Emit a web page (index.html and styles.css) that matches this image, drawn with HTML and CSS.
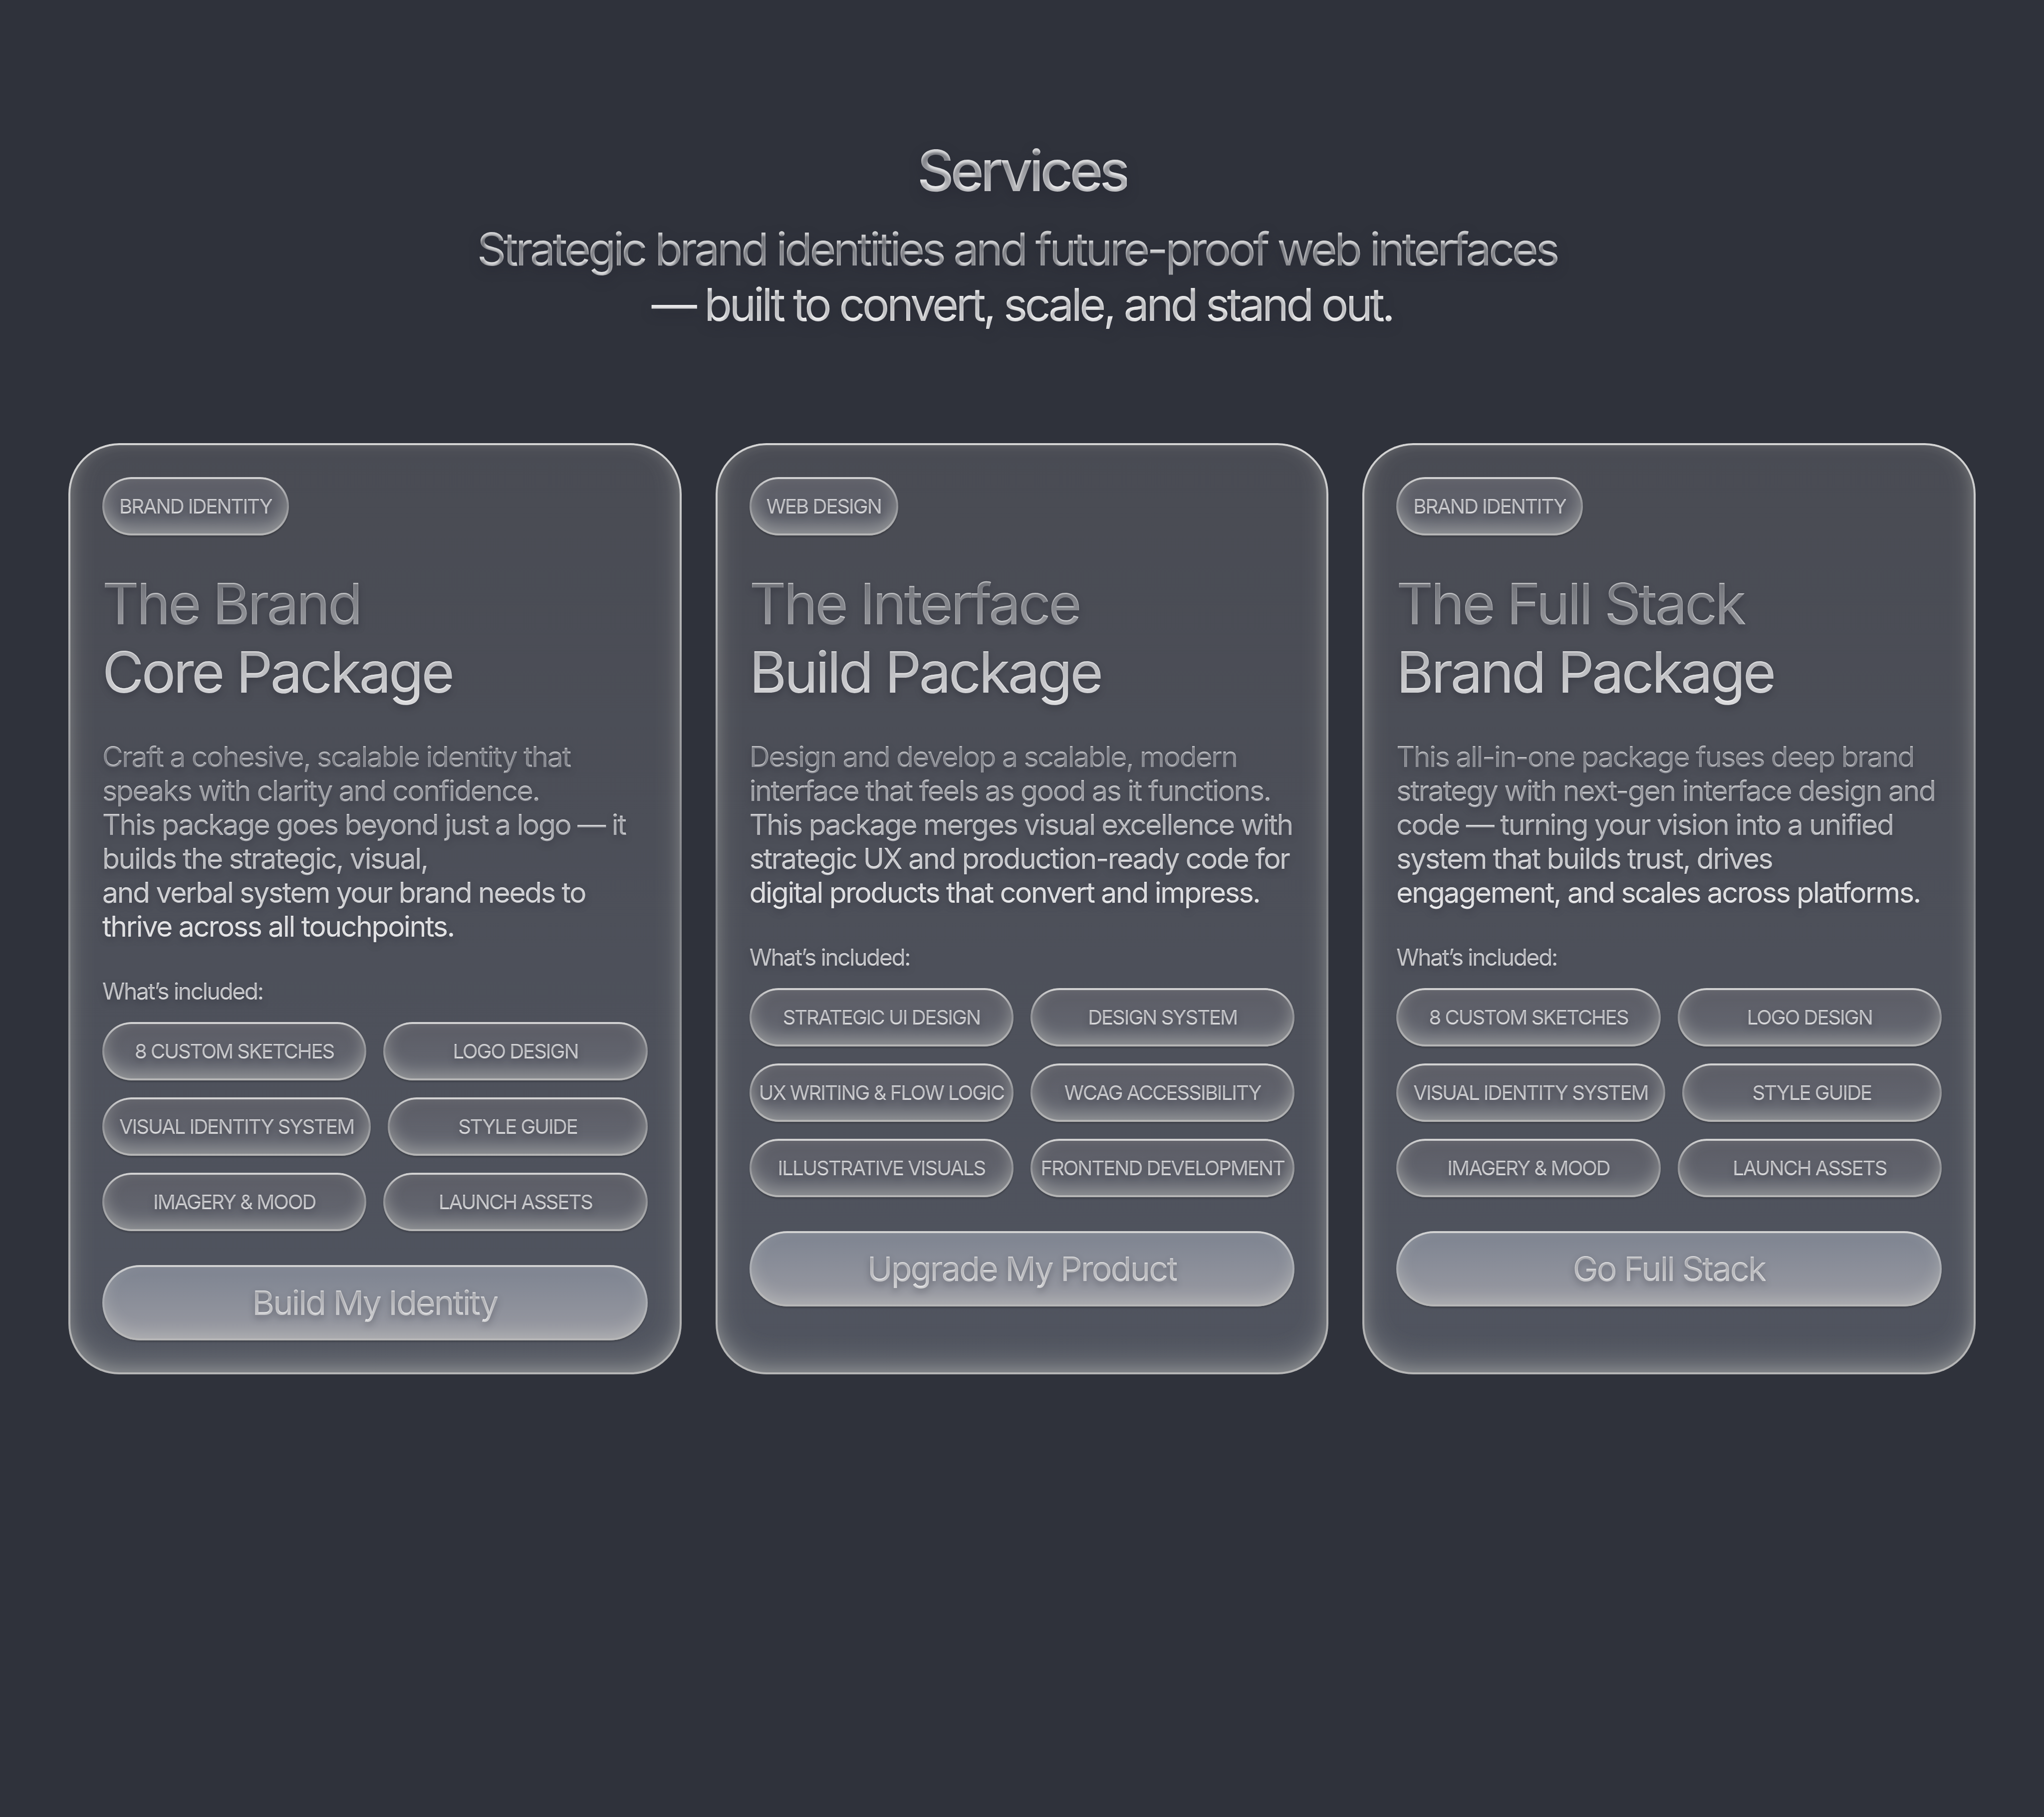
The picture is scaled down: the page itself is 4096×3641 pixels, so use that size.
FILE: index.html
```html
<!DOCTYPE html>
<html lang="en">
<head>
<meta charset="utf-8">
<title>Services</title>
<meta name="viewport" content="width=device-width, initial-scale=1">
<link rel="stylesheet" href="styles.css">
</head>
<body>
<svg class="defs" width="0" height="0" aria-hidden="true">
  <filter id="bevel" x="-5%" y="-20%" width="110%" height="150%" color-interpolation-filters="sRGB">
    <feOffset in="SourceAlpha" dy="2" result="low"/>
    <feGaussianBlur in="low" stdDeviation="1" result="soft"/>
    <feComposite in="SourceAlpha" in2="soft" operator="out" result="rim"/>
    <feFlood flood-color="#fff" flood-opacity="0.7"/>
    <feComposite in2="rim" operator="in" result="light"/>
    <feDropShadow in="SourceGraphic" dx="0" dy="6" stdDeviation="7" flood-color="#1c1c28" flood-opacity="0.35" result="text"/>
    <feMerge><feMergeNode in="text"/><feMergeNode in="light"/></feMerge>
  </filter>
  <filter id="bevel-deep" x="-5%" y="-20%" width="110%" height="150%" color-interpolation-filters="sRGB">
    <feOffset in="SourceAlpha" dy="6" result="low"/>
    <feGaussianBlur in="low" stdDeviation="2" result="soft"/>
    <feComposite in="SourceAlpha" in2="soft" operator="out" result="rim"/>
    <feFlood flood-color="#fff" flood-opacity="0.7"/>
    <feComposite in2="rim" operator="in" result="light"/>
    <feDropShadow in="SourceGraphic" dx="0" dy="8" stdDeviation="12" flood-color="#1c1c28" flood-opacity="0.4" result="text"/>
    <feMerge><feMergeNode in="text"/><feMergeNode in="light"/></feMerge>
  </filter>
</svg>
<main class="page">
  <header class="intro">
    <h1 class="intro-title ink">Services</h1>
    <p class="intro-text ink">Strategic brand identities and future-proof web interfaces&nbsp;<br>— built to convert, scale, and stand out.</p>
  </header>
  <section class="cards">
    <article class="card glass">
      <span class="pill glass tag"><span class="ink">BRAND IDENTITY</span></span>
      <h2 class="card-title ink">The Brand<br>Core Package</h2>
      <p class="card-text ink">Craft a cohesive, scalable identity that<br>speaks with clarity and confidence.<br>This package goes beyond just a logo — it<br>builds the strategic, visual,<br>and verbal system your brand needs to<br>thrive across all touchpoints.</p>
      <div class="included">
        <h3 class="included-title ink">What’s included:</h3>
        <ul class="pills">
          <li class="pill glass"><span class="ink">8 CUSTOM SKETCHES</span></li>
          <li class="pill glass"><span class="ink">LOGO DESIGN</span></li>
        </ul>
        <ul class="pills">
          <li class="pill glass"><span class="ink">VISUAL IDENTITY SYSTEM</span></li>
          <li class="pill glass"><span class="ink">STYLE GUIDE</span></li>
        </ul>
        <ul class="pills">
          <li class="pill glass"><span class="ink">IMAGERY &amp; MOOD</span></li>
          <li class="pill glass"><span class="ink">LAUNCH ASSETS</span></li>
        </ul>
      </div>
      <button class="cta glass" type="button"><span class="ink">Build My Identity</span></button>
    </article>
    <article class="card glass">
      <span class="pill glass tag"><span class="ink">WEB DESIGN</span></span>
      <h2 class="card-title ink">The Interface<br>Build Package</h2>
      <p class="card-text ink">Design and develop a scalable, modern<br>interface that feels as good as it functions.<br>This package merges visual excellence with<br>strategic UX and production-ready code for<br>digital products that convert and impress.</p>
      <div class="included">
        <h3 class="included-title ink">What’s included:</h3>
        <ul class="pills tight">
          <li class="pill glass"><span class="ink">STRATEGIC UI DESIGN</span></li>
          <li class="pill glass"><span class="ink">DESIGN SYSTEM</span></li>
        </ul>
        <ul class="pills tight">
          <li class="pill glass"><span class="ink">UX WRITING &amp; FLOW LOGIC</span></li>
          <li class="pill glass"><span class="ink">WCAG ACCESSIBILITY</span></li>
        </ul>
        <ul class="pills tight">
          <li class="pill glass"><span class="ink">ILLUSTRATIVE VISUALS</span></li>
          <li class="pill glass"><span class="ink">FRONTEND DEVELOPMENT</span></li>
        </ul>
      </div>
      <button class="cta glass" type="button"><span class="ink">Upgrade My Product</span></button>
    </article>
    <article class="card glass">
      <span class="pill glass tag"><span class="ink">BRAND IDENTITY</span></span>
      <h2 class="card-title ink">The Full Stack<br>Brand Package</h2>
      <p class="card-text ink">This all-in-one package fuses deep brand<br>strategy with next-gen interface design and<br>code — turning your vision into a unified<br>system that builds trust, drives<br>engagement, and scales across platforms.</p>
      <div class="included">
        <h3 class="included-title ink">What’s included:</h3>
        <ul class="pills">
          <li class="pill glass"><span class="ink">8 CUSTOM SKETCHES</span></li>
          <li class="pill glass"><span class="ink">LOGO DESIGN</span></li>
        </ul>
        <ul class="pills">
          <li class="pill glass"><span class="ink">VISUAL IDENTITY SYSTEM</span></li>
          <li class="pill glass"><span class="ink">STYLE GUIDE</span></li>
        </ul>
        <ul class="pills">
          <li class="pill glass"><span class="ink">IMAGERY &amp; MOOD</span></li>
          <li class="pill glass"><span class="ink">LAUNCH ASSETS</span></li>
        </ul>
      </div>
      <button class="cta glass" type="button"><span class="ink">Go Full Stack</span></button>
    </article>
  </section>
</main>
</body>
</html>
```

FILE: styles.css
```css
* { box-sizing: border-box; margin: 0; padding: 0; }
body {
  min-height: 100vh;
  background: #2f323b;
  font-family: Inter, "Liberation Sans", sans-serif;
  font-weight: 400;
}
.defs { position: absolute; }
.page { padding: 273px 137px; }

/* Text filled with a light gradient and a lit upper edge */
.ink {
  color: transparent;
  background: linear-gradient(#97989e, #d2d2d4);
  -webkit-background-clip: text;
  background-clip: text;
  filter: url(#bevel);
}
.intro { text-align: center; display: grid; justify-items: center; gap: 34px; letter-spacing: -0.06em; }
.intro .ink { letter-spacing: -0.06em; filter: url(#bevel-deep); }
.intro-title { font-size: 114px; line-height: 137px; font-weight: 500; background-image: linear-gradient(#5c5e66, #d0d0d2); }
.intro-text { font-size: 91px; line-height: 111px; background-image: linear-gradient(#56585f, #d6d6d8); }

.cards {
  margin-top: 222px;
  display: grid;
  grid-template-columns: repeat(3, minmax(0, 1fr));
  gap: 68px;
}
.glass { position: relative; }
.glass::before {
  content: "";
  position: absolute;
  inset: 0;
  border-radius: inherit;
  padding: 4px;
  background: linear-gradient(#d4d4d4, #ffffff26 48%, #b6b6b6);
  -webkit-mask: linear-gradient(#000 0 0) content-box exclude, linear-gradient(#000 0 0);
  mask: linear-gradient(#000 0 0) content-box exclude, linear-gradient(#000 0 0);
  pointer-events: none;
}
.card {
  display: flex;
  flex-direction: column;
  align-items: stretch;
  gap: 68px;
  padding: 68px;
  border-radius: 102px;
  background: linear-gradient(#494b53, #50545f);
  box-shadow: inset 0 -24px 60px #fffff038, inset 0 -8px 30px #fffff038;
}
.pill {
  display: flex;
  justify-content: center;
  padding: 34px;
  border-radius: 58px;
  font-size: 40px;
  line-height: 49px;
  letter-spacing: -0.05em;
  white-space: nowrap;
  background: linear-gradient(#5b5c65, #666973);
  box-shadow: inset 0 -12px 34px #fffff058, 0 3px 3px #0003;
}
.tag { align-self: flex-start; }
.card-title { font-size: 114px; line-height: 137px; font-weight: 400; letter-spacing: -0.04em; background-image: linear-gradient(#66686f, #dcdcde); }
.card-text { font-size: 57px; line-height: 68px; letter-spacing: -0.04em; white-space: nowrap; background-image: linear-gradient(#74767e, #e4e4e6); }
.included { display: grid; gap: 34px; }
.included-title { justify-self: start; font-size: 46px; line-height: 55px; font-weight: 400; letter-spacing: -0.05em; }
.pills { display: flex; gap: 34px; list-style: none; }
.pills .pill { flex: 1 1 0; }
.pills.tight .pill { padding-inline: 17px; }
.cta {
  border: 0;
  padding: 34px;
  border-radius: 76px;
  font-family: inherit;
  font-size: 68px;
  line-height: 83px;
  letter-spacing: -0.04em;
  background: linear-gradient(#7d8390, #9a9ba3);
  box-shadow: inset 0 -12px 34px #fffff040, 0 3px 3px #0003;
}
```
